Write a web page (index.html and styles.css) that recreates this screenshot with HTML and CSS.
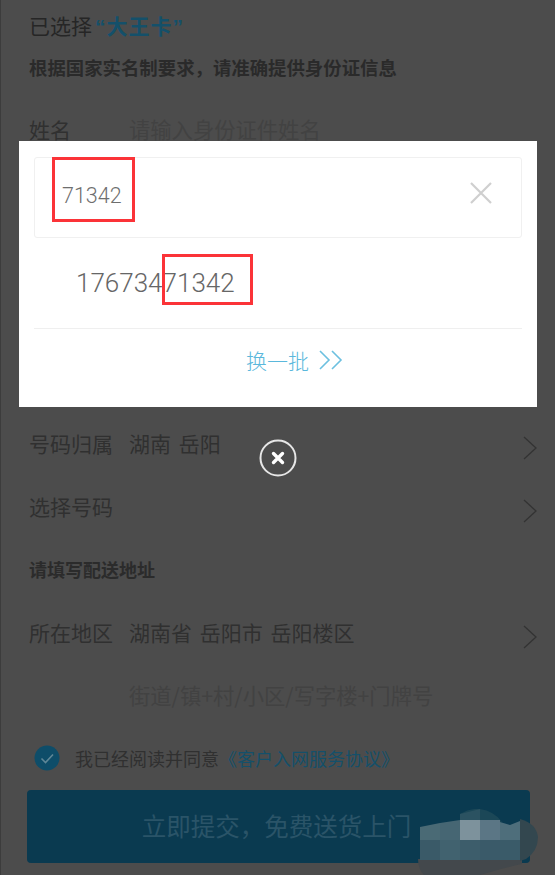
FILE: index.html
```html
<!DOCTYPE html>
<html lang="zh-CN">
<head>
<meta charset="UTF-8" />
<meta name="viewport" content="width=device-width, initial-scale=1.0" />
<title>已选择大王卡</title>
<link rel="stylesheet" href="styles.css">
</head>
<body>

<!-- ───── FORM (dimmed behind the dialog) ───── -->
<div class="page">
  <h1 class="title">已选择<span class="blue">“大王卡”</span></h1>
  <p class="sub">根据国家实名制要求，请准确提供身份证信息</p>

  <div class="row"><span class="key">姓名</span><span class="ph">请输入身份证件姓名</span></div>
  <div class="covered"></div>

  <div class="row">
    <span class="key">号码归属</span><span class="val">湖南 岳阳</span>
    <svg class="arrow" viewBox="0 0 16 26"><path d="M2 2l12 11L2 24"/></svg>
  </div>
  <div class="row">
    <span class="key">选择号码</span>
    <svg class="arrow" viewBox="0 0 16 26"><path d="M2 2l12 11L2 24"/></svg>
  </div>
  <div class="row section">请填写配送地址</div>
  <div class="row">
    <span class="key">所在地区</span><span class="val">湖南省 岳阳市 岳阳楼区</span>
    <svg class="arrow" viewBox="0 0 16 26"><path d="M2 2l12 11L2 24"/></svg>
  </div>
  <div class="row"><span class="key"></span><span class="ph">街道/镇+村/小区/写字楼+门牌号</span></div>

  <div class="agree">
    <svg class="check" viewBox="0 0 26 26"><circle cx="13" cy="13" r="12.5"/><path d="M7.5 13.5l4 4 7.5-8"/></svg>
    <span>我已经阅读并同意</span><span class="blue">《客户入网服务协议》</span>
  </div>
  <div class="submit">立即提交，免费送货上门</div>
</div>

<!-- ───── NUMBER SEARCH DIALOG ───── -->
<div class="dialog">
  <div class="search">
    <span class="typed">71342</span>
    <svg class="clear" viewBox="0 0 24 24"><path d="M2 2l20 20M22 2L2 22"/></svg>
  </div>
  <div class="number">17673471342</div>
  <div class="more">
    <span>换一批</span>
    <svg class="more-icon" viewBox="0 0 24 22"><path d="M1 2l9 9-9 9M13 2l9 9-9 9"/></svg>
  </div>
  <div class="mark mark-typed"></div>
  <div class="mark mark-number"></div>
</div>

<svg class="close" viewBox="0 0 38 38">
  <circle cx="19" cy="19" r="17.5"/>
  <path d="M14.5 14.5l9 9M23.5 14.5l-9 9"/>
</svg>

<!-- mosaic smudge in the corner -->
<svg class="smudge" viewBox="0 0 122 66">
  <path d="M0 50H104V55Q90 58 76 62L62 66H6Q0 60 0 50Z" fill="#43484c"/>
  <path d="M102 10Q118 14 120 28Q120 42 108 50L102 52Z" fill="#33474f"/>
  <path d="M42 12V5Q52 -1 62 0Q76 2 84 13Z" fill="#1b4757"/>
  <path d="M42 12V5L62 0V12Z" fill="#2b5261"/>
  <path d="M2 18L22 14V31H2Z" fill="#4a6a75"/>
  <path d="M22 14L42 11V31H22Z" fill="#466673"/>
  <rect x="42" y="11" width="20" height="20" fill="#7d929c"/>
  <rect x="62" y="11" width="20" height="20" fill="#5b7685"/>
  <path d="M82 13L92 16L102 12V31H82Z" fill="#4e6e7b"/>
  <rect x="2" y="31" width="20" height="20" fill="#3a5a68"/>
  <rect x="22" y="31" width="20" height="20" fill="#41626f"/>
  <rect x="42" y="31" width="20" height="20" fill="#3d5d6b"/>
  <rect x="62" y="31" width="20" height="20" fill="#3a5a69"/>
  <rect x="82" y="31" width="20" height="20" fill="#3a5b69"/>
</svg>

</body>
</html>
```

FILE: styles.css
```css
/* ───── RESET ───── */
*{margin:0;padding:0;box-sizing:border-box}

body{
  width:555px;height:875px;overflow:hidden;position:relative;
  background:#4c4c4c;color:#2d2d2d;
  font-family:"Noto Sans CJK SC","Liberation Sans",sans-serif;
}

/* ───── FORM ───── */
.page{height:875px;padding:15px 26px 0 28px;border-left:1px solid #3c3c3c}
.title{font-size:21px;font-weight:400;line-height:24px;color:#262626;font-family:"Liberation Sans","Noto Sans CJK SC",sans-serif}
.blue{color:#14506a}
.title .blue{margin-left:3px;letter-spacing:1px;font-weight:700}
.sub{margin-top:16px;font-size:18.4px;font-weight:700;line-height:24px;color:#2a2a2a}

.row{height:63px;display:flex;align-items:center;font-size:21px;line-height:24px;color:#303030;position:relative;padding-bottom:5px}
.row:first-of-type{margin-top:21px}
.key{width:100px;flex:none}
.val{color:#303030;word-spacing:3px}
.ph{color:#424242;font-size:21.3px}
.section{font-size:18px;font-weight:700;color:#2b2b2b}
.covered{height:251px}
.arrow{position:absolute;right:-9px;top:21px;width:16px;height:26px;fill:none;stroke:#333;stroke-width:1.3}

.agree{height:60px;display:flex;align-items:center;font-size:18px;color:#303030;margin-left:5px;padding-bottom:3px}
.check{width:26px;height:26px;margin-right:15px;flex:none}
.check circle{fill:#0e4d69}
.check path{fill:none;stroke:#5f8797;stroke-width:1.6}

.submit{
  margin:1px 0 0 -2px;width:503px;height:73px;border-radius:4px;
  background:#0a3a50;color:#2a5468;font-size:24.5px;
  display:flex;align-items:center;justify-content:center;padding:0 4px 3px 0;
}

/* ───── DIALOG ───── */
.dialog{
  position:absolute;left:19px;top:141px;width:518px;height:266px;
  background:#fff;padding:16px 15px 0;
  font-family:Roboto,"Noto Sans CJK SC",sans-serif;
}
.search{
  height:81px;border:1px solid #f0f0f0;border-radius:3px;
  display:flex;align-items:center;justify-content:space-between;
  padding:0 28px 0 27px;
}
.typed{font-size:21.5px;font-weight:300;color:#6e6e6e;position:relative;top:-2px}
.clear{width:24px;height:24px;fill:none;stroke:#cfcfcf;stroke-width:2.2;position:relative;top:-5px}
.number{
  height:91px;padding:0 0 1px 42px;display:flex;align-items:center;
  font-size:26px;font-weight:300;color:#666;
  border-bottom:1px solid #efefef;
}
.more{
  height:62px;display:flex;align-items:center;justify-content:center;gap:10px;
  padding-left:33px;
  font-size:21px;color:#5ab8dc;
  font-family:"Noto Sans CJK SC",sans-serif;font-weight:300;
}
.more-icon{width:24px;height:22px;fill:none;stroke:#6cc0e0;stroke-width:1.6}
.mark{position:absolute;border:3px solid #fb3338}
.mark-typed{left:33px;top:16px;width:83px;height:65px}
.mark-number{left:143px;top:113px;width:91px;height:51px}

/* ───── OVERLAY BITS ───── */
.close{position:absolute;left:259px;top:439px;width:38px;height:38px}
.close circle{fill:none;stroke:#e6e6e6;stroke-width:2}
.close path{fill:none;stroke:#fff;stroke-width:3.4;stroke-linecap:round}
.smudge{position:absolute;left:418px;top:809px;width:122px;height:66px}
```
